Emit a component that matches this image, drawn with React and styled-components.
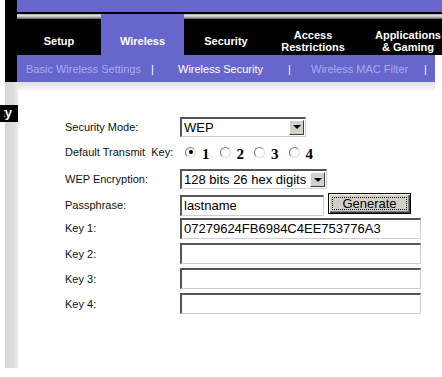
import React from 'react';
import styled, { createGlobalStyle } from 'styled-components';

const PURPLE = '#6666cc';

const GlobalStyle = createGlobalStyle`
  html, body {
    margin: 0;
    padding: 0;
    background: #fff;
  }

  body {
    font-family: 'Liberation Sans', Arial, sans-serif;
  }
`;

const StyledPage = styled.div`
  width: 442px;
  height: 377px;
  overflow: hidden;
  background: #fff;
`;

const StyledHeader = styled.header`
  display: grid;
  grid-template-columns: 17px 1fr;
  height: 82px;
`;

const StyledCorner = styled.div`
  border-left: 5px solid #fff;
  background: #000;
`;

const StyledHeaderMain = styled.div`
  display: flex;
  flex-direction: column;
  min-width: 0;
`;

const StyledTopBand = styled.div`
  height: 12px;
  background: ${PURPLE};
  border-bottom: 2px solid #000;
`;

const StyledTabs = styled.nav`
  display: flex;
  height: 41px;
  background: #000;
`;

const StyledTab = styled.div`
  flex: 0 0 ${({ $w }) => $w}px;
  box-sizing: border-box;
  display: flex;
  align-items: center;
  justify-content: center;
  padding-top: 13px;
  color: #fff;
  font-size: 11px;
  font-weight: bold;
  line-height: 12px;
  text-align: center;
  background: ${({ $active }) =>
    $active
      ? PURPLE
      : 'linear-gradient(#8a8a8a, #e8e8e8 1px, #bdbdbd 3px, #555 5px) top / 100% 5px no-repeat #000'};
`;

const StyledSubNav = styled.div`
  display: flex;
  align-items: center;
  height: 27px;
  margin-right: 7px;
  padding-left: 9px;
  background: ${PURPLE};
  font-size: 11px;
  white-space: nowrap;
`;

const StyledSubItem = styled.span`
  flex: 0 0 ${({ $w }) => $w}px;
  color: ${({ $active }) => ($active ? '#fff' : '#aaaaee')};
`;

const StyledBody = styled.div`
  display: grid;
  grid-template-columns: 18px 417px;
  height: 286px;
`;

const StyledSide = styled.aside`
  padding-top: 23px;
  border-left: 5px solid #fff;
  background: linear-gradient(to right, #d6d6d6, #dedede 9px, #ececec);
`;

const StyledSideTitle = styled.div`
  box-sizing: border-box;
  display: flex;
  justify-content: flex-end;
  width: 18px;
  height: 17px;
  margin-left: -5px;
  padding-right: 6px;
  overflow: hidden;
  background: #000;
  color: #fff;
  font-size: 13px;
  font-weight: bold;
  line-height: 15px;
  white-space: nowrap;

  span {
    flex: none;
  }
`;

const StyledSideClip = styled.div`
  display: flex;
  justify-content: flex-end;
  width: 8px;
  overflow: hidden;
`;

const StyledMain = styled.main`
  display: flex;
  flex-direction: column;
`;

const StyledBand = styled.div`
  height: 8px;
  background: linear-gradient(#e2e2e2, #ececec 5px, #f6f6f6);
`;

const StyledForm = styled.form`
  display: flex;
  flex-direction: column;
  padding: 24px 0 0 47px;
`;

const StyledRow = styled.div`
  display: grid;
  grid-template-columns: 115px auto;
  align-items: center;
  height: ${({ $h }) => $h}px;
`;

const StyledLabel = styled.label`
  color: #111;
  font-size: 11px;
  white-space: nowrap;
`;

const StyledTextBox = styled.input`
  box-sizing: border-box;
  width: ${({ $w }) => $w}px;
  height: 21px;
  margin: 0;
  padding: 0 2px;
  border-style: solid;
  border-width: 2px 1px 1px 2px;
  border-color: #555 #cfcfcf #cfcfcf #555;
  background: #fff;
  color: #000;
  font-family: 'Liberation Sans', Arial, sans-serif;
  font-size: 13px;
  outline: none;
`;

const StyledSelect = styled.div`
  box-sizing: border-box;
  display: flex;
  align-items: center;
  width: ${({ $w }) => $w}px;
  height: 20px;
  padding-left: 2px;
  border-style: solid;
  border-width: 2px 1px 1px 2px;
  border-color: #555 #cfcfcf #cfcfcf #555;
  background: #fff;
  color: #000;
  font-size: 13px;
`;

const StyledArrow = styled.span`
  box-sizing: border-box;
  display: flex;
  align-items: center;
  justify-content: center;
  width: 15px;
  height: 15px;
  margin: 0 1px 0 auto;
  border: 1px solid;
  border-color: #fff #404040 #404040 #fff;
  background: #d4d0c8;

  &:after {
    content: '';
    border-top: 4px solid #000;
    border-left: 4px solid transparent;
    border-right: 4px solid transparent;
  }
`;

const StyledFieldGroup = styled.div`
  display: flex;
  align-items: center;
  gap: 4px;
`;

const StyledButton = styled.button`
  box-sizing: border-box;
  display: flex;
  width: 83px;
  height: 21px;
  margin: 0 0 3px;
  padding: 3px;
  border: 1px solid #000;
  background: #d4d0c8;
  box-shadow: inset 1px 1px #fff, inset -1px -1px #404040, inset -2px -2px #808080;
  color: #000;
  font-family: 'Liberation Sans', Arial, sans-serif;
  font-size: 13px;

  span {
    flex: 1;
    display: flex;
    align-items: center;
    justify-content: center;
    border: 1px dotted #000;
    line-height: 11px;
  }
`;

const StyledRadios = styled.div`
  display: flex;
  align-items: center;
  padding-left: 5px;
`;

const StyledRadio = styled.span`
  box-sizing: border-box;
  display: flex;
  align-items: center;
  justify-content: center;
  width: 11px;
  height: 11px;
  margin: 0 6px 0 0;
  border: 1px solid;
  border-color: #7a7a7a #dcdcdc #dcdcdc #7a7a7a;
  border-radius: 50%;
  background: #fff;

  &:after {
    content: '';
    width: 4px;
    height: 4px;
    border-radius: 50%;
    background: ${({ $checked }) => ($checked ? '#000' : 'transparent')};
  }
`;

const StyledDigit = styled.span`
  margin: 4px 10px 0 0;
  color: #000;
  font-family: 'Liberation Serif', 'Times New Roman', serif;
  font-size: 15px;
  font-weight: bold;
`;

const tabs = [
  { w: 84, label: ['Setup'] },
  { w: 83, label: ['Wireless'], active: true },
  { w: 84, label: ['Security'] },
  { w: 90, label: ['Access', 'Restrictions'] },
  { w: 100, label: ['Applications', '& Gaming'] },
];

const subNav = [
  { w: 125, text: 'Basic Wireless Settings' },
  { w: 27, text: '|', sep: true },
  { w: 110, text: 'Wireless Security', active: true },
  { w: 23, text: '|', sep: true },
  { w: 113, text: 'Wireless MAC Filter' },
  { w: 10, text: '|', sep: true },
];

const keys = [
  { label: 'Key 1:', value: '07279624FB6984C4EE753776A3', h: 26 },
  { label: 'Key 2:', value: '', h: 25 },
  { label: 'Key 3:', value: '', h: 25 },
  { label: 'Key 4:', value: '', h: 25 },
];

const App = () => (
  <StyledPage>
    <GlobalStyle />

    <StyledHeader>
      <StyledCorner />
      <StyledHeaderMain>
        <StyledTopBand />
        <StyledTabs>
          {tabs.map((tab, i) => (
            <StyledTab key={i} $w={tab.w} $active={tab.active}>
              <div>
                {tab.label.map((line, j) => (
                  <div key={j}>{line}</div>
                ))}
              </div>
            </StyledTab>
          ))}
        </StyledTabs>
        <StyledSubNav>
          {subNav.map((item, i) => (
            <StyledSubItem key={i} $w={item.w} $active={item.active || item.sep}>
              {item.text}
            </StyledSubItem>
          ))}
        </StyledSubNav>
      </StyledHeaderMain>
    </StyledHeader>

    <StyledBody>
      <StyledSide>
        <StyledSideTitle>
          <StyledSideClip>
            <span>Security</span>
          </StyledSideClip>
        </StyledSideTitle>
      </StyledSide>

      <StyledMain>
        <StyledBand />
        <StyledForm onSubmit={e => e.preventDefault()}>
          <StyledRow $h={25}>
            <StyledLabel>Security Mode:</StyledLabel>
            <StyledSelect $w={126}>
              WEP
              <StyledArrow />
            </StyledSelect>
          </StyledRow>

          <StyledRow $h={26}>
            <StyledLabel>Default Transmit&nbsp; Key:</StyledLabel>
            <StyledRadios>
              {[1, 2, 3, 4].map(n => (
                <React.Fragment key={n}>
                  <StyledRadio $checked={n === 1} />
                  <StyledDigit>{n}</StyledDigit>
                </React.Fragment>
              ))}
            </StyledRadios>
          </StyledRow>

          <StyledRow $h={28}>
            <StyledLabel>WEP Encryption:</StyledLabel>
            <StyledSelect $w={147}>
              128 bits 26 hex digits
              <StyledArrow />
            </StyledSelect>
          </StyledRow>

          <StyledRow $h={22}>
            <StyledLabel>Passphrase:</StyledLabel>
            <StyledFieldGroup>
              <StyledTextBox $w={144} defaultValue="lastname" readOnly />
              <StyledButton type="button">
                <span>Generate</span>
              </StyledButton>
            </StyledFieldGroup>
          </StyledRow>

          {keys.map(key => (
            <StyledRow key={key.label} $h={key.h}>
              <StyledLabel>{key.label}</StyledLabel>
              <StyledTextBox $w={241} defaultValue={key.value} readOnly />
            </StyledRow>
          ))}
        </StyledForm>
      </StyledMain>
    </StyledBody>
  </StyledPage>
);

export default App;
